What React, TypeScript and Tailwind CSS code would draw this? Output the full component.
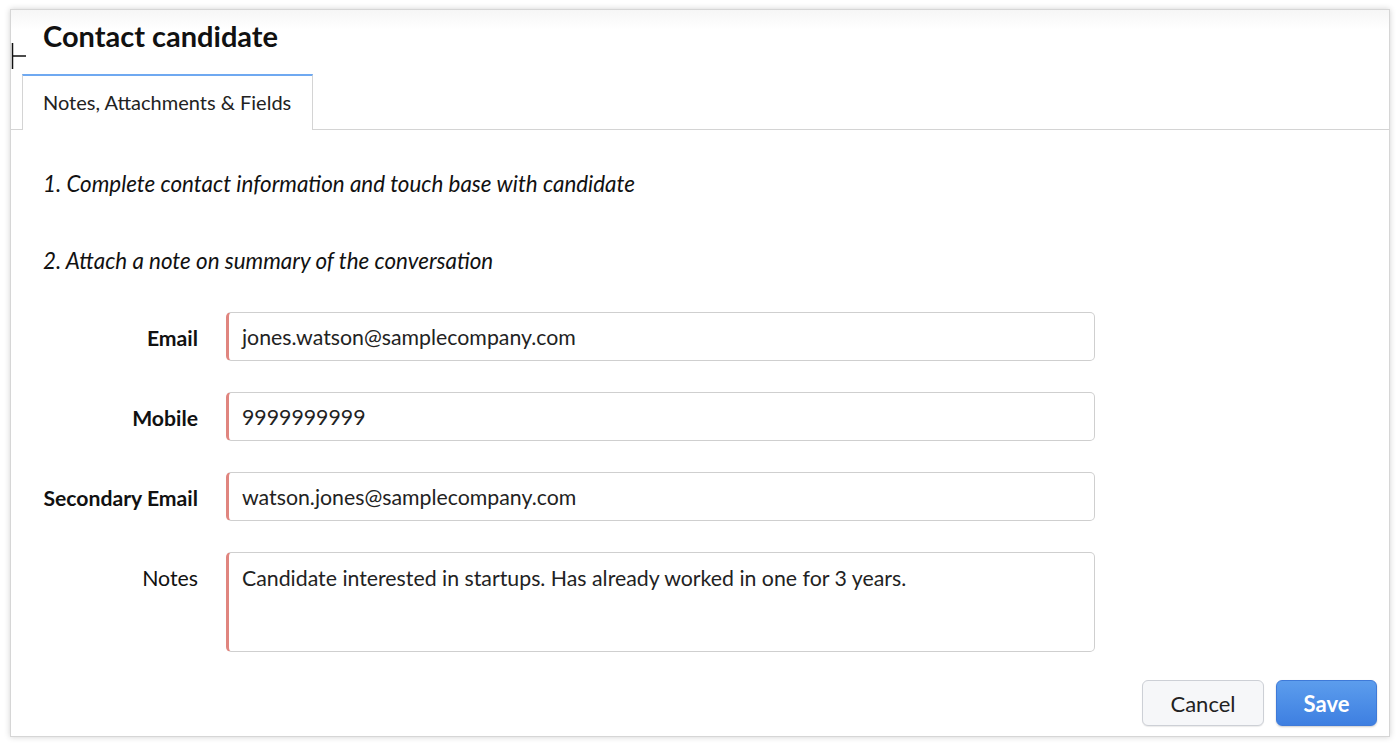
import React from "react";

const fields = [
  { label: "Email", value: "jones.watson@samplecompany.com", bold: true },
  { label: "Mobile", value: "9999999999", bold: true },
  { label: "Secondary Email", value: "watson.jones@samplecompany.com", bold: true },
];

export default function App() {
  return (
    <div
      className="relative h-[746px] w-[1400px] bg-white pt-[9px] px-[10px] pb-[9px]"
      style={{ fontFamily: "Lato, 'Open Sans', sans-serif" }}
    >
      <div className="flex h-full flex-col border border-[#d6d6d6] bg-white shadow-[0_0_6px_rgba(0,0,0,0.18)]">
        {/* header */}
        <div className="h-[64px] bg-gradient-to-b from-[#f6f6f6] to-white to-30% pl-[32px] pt-[8px]">
          <h1 className="text-[29px] font-bold leading-[36px] text-[#111]">Contact candidate</h1>
        </div>

        {/* tabs */}
        <div className="flex border-b border-[#d4d4d4] pl-[11px]">
          <div className="-mb-px h-[56px] w-[291px] border-x border-t-2 border-x-[#d4d4d4] border-t-[#6fa9f1] bg-white pl-[20px] pt-[13px] text-[20px] leading-[26px] text-[#222]">
            Notes, Attachments &amp; Fields
          </div>
        </div>

        {/* body */}
        <div className="flex flex-1 flex-col pl-[32px] pr-[12px]">
          <p className="mt-[40px] text-[22.4px] italic leading-[28px] text-[#111]">
            1. Complete contact information and touch base with candidate
          </p>
          <p className="mt-[49px] text-[22.4px] italic leading-[28px] text-[#111]">
            2. Attach a note on summary of the conversation
          </p>

          <div className="mt-[37px] flex flex-col gap-[31px]">
            {fields.map((f) => (
              <div key={f.label} className="flex items-center">
                <label className="w-[155px] whitespace-nowrap pt-[2px] text-right text-[21.2px] font-bold leading-[28px] text-[#111]">
                  {f.label}
                </label>
                <div className="ml-[28px] flex h-[49px] w-[869px] items-center rounded-[5px] border border-[#cfcfcf] border-l-[3px] border-l-[#e0857f] pl-[13px] pt-[3px] text-[21.3px] text-[#222]">
                  {f.value}
                </div>
              </div>
            ))}
            <div className="flex items-start">
              <label className="w-[155px] pt-[12px] text-right text-[21.3px] leading-[28px] text-[#111]">
                Notes
              </label>
              <div className="ml-[28px] h-[100px] w-[869px] rounded-[5px] border border-[#cfcfcf] border-l-[3px] border-l-[#e0857f] pl-[13px] pt-[11px] text-[21.3px] leading-[28px] text-[#222]">
                Candidate interested in startups. Has already worked in one for 3 years.
              </div>
            </div>
          </div>

          <div className="mt-[28px] flex justify-end gap-[12px]">
            <button className="h-[46px] w-[122px] rounded-[6px] border border-[#cdd0d6] bg-[#f6f7f9] text-[22px] text-[#222] shadow-[0_1px_1px_rgba(0,0,0,0.08)]">
              Cancel
            </button>
            <button className="h-[46px] w-[101px] rounded-[6px] border border-[#3f7ad8] bg-gradient-to-b from-[#5c9ded] to-[#3e7fe1] text-[22px] font-bold text-white shadow-[0_1px_2px_rgba(0,0,0,0.2)]">
              Save
            </button>
          </div>
        </div>
      </div>

      {/* crosshair cursor */}
      <svg className="absolute left-[10px] top-[42px]" width="18" height="28" viewBox="0 0 18 28">
        <path d="M2.5 1v26M2.5 14H16" stroke="#111" strokeWidth="1.5" fill="none" />
      </svg>
    </div>
  );
}
